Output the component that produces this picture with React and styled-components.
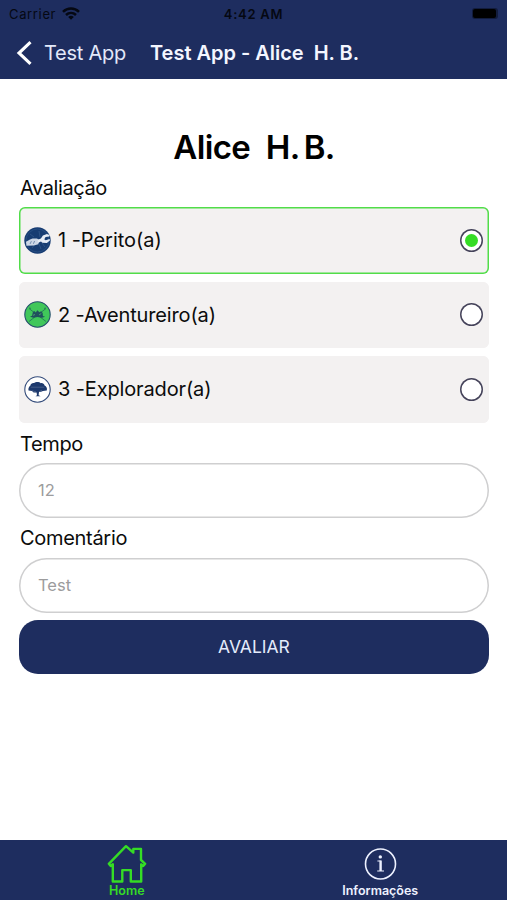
import React, { useState } from "react";
import styled, { createGlobalStyle } from "styled-components";

const NAVY = "#1e2d5f";
const GREEN = "#35dc25";

const GlobalStyle = createGlobalStyle`
  *, *::before, *::after { box-sizing: border-box; }
  body { margin: 0; background: #fff; }
  button, input { font: inherit; }
`;

const Screen = styled.div`
  width: 507px;
  height: 900px;
  display: flex;
  flex-direction: column;
  overflow: hidden;
  background: #fff;
  color: #0c0c0c;
  font-family: Inter, "Liberation Sans", sans-serif;
`;

const Header = styled.header`
  flex: none;
  height: 79px;
  background: ${NAVY};
`;

const StatusBar = styled.div`
  height: 27px;
  padding: 0 9px;
  display: grid;
  grid-template-columns: 1fr auto 1fr;
  align-items: center;
  color: #050812;
  font-size: 13px;
  line-height: 16px;
`;

const Carrier = styled.div`
  display: flex;
  align-items: center;
  gap: 6px;
  letter-spacing: 0.65px;
`;

const Clock = styled.div`
  font-weight: 600;
  letter-spacing: 0.75px;
`;

const Battery = styled.div`
  justify-self: end;
  width: 26px;
  height: 11px;
  padding: 1px;
  border-radius: 3px;
  background: #121c3d;
  &::before {
    content: "";
    display: block;
    height: 9px;
    width: 23px;
    border-radius: 2px;
    background: #000;
  }
`;

const NavBar = styled.nav`
  height: 52px;
  padding-left: 16px;
  display: flex;
  align-items: center;
  color: #f4f6ff;
  font-size: 20px;
  line-height: 26px;
  white-space: pre;
`;

const BackButton = styled.button`
  width: 134px;
  padding: 0;
  display: flex;
  align-items: center;
  gap: 11px;
  border: 0;
  background: none;
  color: #e3e9fa;
  letter-spacing: -0.25px;
`;

const NavTitle = styled.span`
  font-weight: 600;
  letter-spacing: -0.02px;
`;

const Content = styled.main`
  flex: 1;
  padding: 46px 18px 0 19px;
`;

const Name = styled.h1`
  margin: 0;
  height: 45px;
  text-align: center;
  white-space: pre;
  font-size: 33px;
  font-weight: 600;
  line-height: 44px;
  letter-spacing: -0.6px;
  color: #000;
`;

const Initial = styled.span`
  margin-left: -3px;
`;

const Label = styled.div`
  height: ${(p) => p.$height}px;
  padding: ${(p) => p.$top}px 0 0 1px;
  font-size: 20px;
  line-height: 26px;
  letter-spacing: ${(p) => p.$tracking || 0}px;
`;

const Options = styled.div`
  display: flex;
  flex-direction: column;
  gap: 8px;
`;

const Option = styled.button`
  height: 66.6px;
  padding: 0 6px 0 5px;
  display: flex;
  align-items: center;
  gap: 7px;
  border: 0;
  border-radius: 6px;
  box-shadow: inset 0 0 0 1.5px ${(p) => (p.$selected ? "#51dd49" : "#f3f1f1")};
  background: #f3f1f1;
  color: #0c0c0c;
  text-align: left;
  font-size: 20px;
  letter-spacing: ${(p) => p.$tracking}px;
`;

const OptionText = styled.span`
  flex: 1;
`;

const Radio = styled.span`
  width: 23px;
  height: 23px;
  display: grid;
  place-items: center;
  box-shadow: inset 0 0 0 1.5px #45435a;
  border-radius: 50%;
  background: #fff;
`;

const Dot = styled.span`
  width: 13px;
  height: 13px;
  border-radius: 50%;
  background: ${GREEN};
`;

const Field = styled.input`
  display: block;
  width: 100%;
  height: 55px;
  padding: 0 19px;
  border: 0;
  box-shadow: inset 0 0 0 1.5px #cfcfd0;
  border-radius: 28px;
  outline: 0;
  background: #fff;
  color: #9c9c9d;
  font-size: 16.5px;
`;

const Submit = styled.button`
  width: 100%;
  height: 54px;
  margin-top: 7px;
  border: 0;
  border-radius: 19px;
  background: ${NAVY};
  color: #e4ebfb;
  font-size: 17.5px;
`;

const TabBar = styled.nav`
  flex: none;
  height: 60px;
  display: grid;
  grid-template-columns: 1fr 1fr;
  background: ${NAVY};
`;

const Tab = styled.button`
  padding: 4px 0 0;
  display: flex;
  flex-direction: column;
  align-items: center;
  border: 0;
  background: none;
  color: ${(p) => (p.$active ? GREEN : "#edf1ff")};
  font-size: 12.5px;
  font-weight: 600;
  line-height: 14px;
`;

const TabIcon = styled.svg`
  flex: none;
  width: 40px;
  height: 40px;
  fill: none;
  stroke: currentColor;
`;

const Emblem = styled.svg`
  flex: none;
  width: 27px;
  height: 27px;
`;

const Glyph = styled.svg`
  flex: none;
  display: block;
`;

function WifiIcon() {
  return (
    <Glyph width="18" height="13" viewBox="0 0 18 13" fill="none" stroke="currentColor" strokeWidth="2.5">
      <path d="M1 4.8C5.5.4 12.5.4 17 4.8M4 8c2.9-2.8 7.1-2.8 10 0" />
      <path d="M6.2 9.9c1.7-1.4 3.9-1.4 5.6 0L9 12.8z" fill="currentColor" stroke="none" />
    </Glyph>
  );
}

function ExpertEmblem() {
  return (
    <Emblem viewBox="0 0 27 27">
      <circle cx="13.5" cy="13.5" r="13.2" fill="#173c72" />
      <circle cx="13.5" cy="13.5" r="11.5" fill="none" stroke="#2d5488" strokeWidth=".7" />
      <path d="M6 7l4 3M15 4l1 6M8 21l3-4M17 22l-2-5M21 20l-3-4" stroke="#34588a" strokeWidth=".8" />
      <path d="M2 14.8l4-2.2 2.5-1 4.5-.2 2.2 1.5-.9 4.4-4.4 1.1-7.5.3z" fill="#ccd6e6" />
      <path d="M6 17l1.4-2.8M9.4 16.8l1.2-2.8" stroke="#5c7aa3" strokeWidth=".8" />
      <path d="M13.8 12.8l3.1-1.3 2-3 4-1.6 2.7 1-.2 1.7-3.8.4-1.3 2.2 1.4 1.1 3.8-1.3.6 1.3-3.2 2.6-4.6-.1-1.3-1.2-3.2 1.4z" fill="#e6ecf5" />
    </Emblem>
  );
}

function AdventurerEmblem() {
  return (
    <Emblem viewBox="0 0 27 27">
      <circle cx="13.5" cy="13.5" r="12.7" fill="#40c75a" stroke="#27506e" strokeWidth="1.1" />
      <path d="M5 7.5l17 13M22 7.5L5 20.5M5 7l2 .4M22 7l-2 .4" stroke="#268057" strokeWidth="1" />
      <path d="M6 15.6l2.1-.8.7-3.5 1.5-1.3 1.4 1.5 1.7-2.2 2 2 1.7-1.1 1.6 1.7.2 3 2.2.8-3.1 1-4.5-.7-4.3.8z" fill="#20515d" />
      <path d="M9 14.3l2-.8M15 14l2.3-1.5" stroke="#57ae70" strokeWidth=".8" />
    </Emblem>
  );
}

function ExplorerEmblem() {
  return (
    <Emblem viewBox="0 0 27 27">
      <circle cx="13.5" cy="13.5" r="12.7" fill="#fff" stroke="#344c7b" strokeWidth="1.1" />
      <path d="M4.5 14.4c-.4-2 .4-3.9 1.8-4.7.3-2 2.2-3 3.9-2.6 1.5-1.3 5-1.4 6.4.1 1.9-.5 3.6.8 4 2.4 1.8.8 2.8 2.8 2.2 4.8l-3.9.5-1.8.9-2.1.2-.4 3.3 2 1h-5.1l1.5-1.1-.4-2.7-3-.1-1.5-1.4z" fill="#1d396d" />
      <path d="M6.7 11.2h13.6M8 14.7l4 1.2M18 14.2l-3 1.5" stroke="#5f769b" strokeWidth=".6" />
    </Emblem>
  );
}

function HomeIcon() {
  return (
    <TabIcon viewBox="0 0 40 40" strokeWidth="2.4" strokeLinejoin="round" strokeLinecap="round">
      <path d="M1.8 19.8L19 2.2 26.3 8.6V4.9H34V16l4.2 3.8-2 2.2-2-1.7V37.5H23.8V26.1h-8.5v11.4H5.8V20.3L3.7 22z" />
    </TabIcon>
  );
}

function InfoIcon() {
  return (
    <TabIcon viewBox="0 0 40 40" strokeWidth="1.6">
      <circle cx="20.5" cy="20" r="15" />
      <circle cx="20.3" cy="12.9" r="1.7" fill="currentColor" stroke="none" />
      <path d="M17.4 17h3.4M17.2 27h6.8" strokeWidth="1.2" />
      <path d="M20.6 16.5V27" strokeWidth="2.4" />
    </TabIcon>
  );
}

const LEVELS = [
  { text: "1 -Perito(a)", Icon: ExpertEmblem, tracking: -0.04 },
  { text: "2 -Aventureiro(a)", Icon: AdventurerEmblem, tracking: -0.14 },
  { text: "3 -Explorador(a)", Icon: ExplorerEmblem, tracking: -0.14 },
];

export default function App() {
  const [level, setLevel] = useState(0);
  return (
    <Screen>
      <GlobalStyle />
      <Header>
        <StatusBar>
          <Carrier>Carrier<WifiIcon /></Carrier>
          <Clock>4:42 AM</Clock>
          <Battery />
        </StatusBar>
        <NavBar>
          <BackButton>
            <Glyph width="17" height="26" viewBox="0 0 17 26" fill="none" stroke="#fff" strokeWidth="3.1">
              <path d="M14.5 2.2L3 13l11.5 10.8" />
            </Glyph>
            Test App
          </BackButton>
          <NavTitle>{"Test App - Alice  H. B."}</NavTitle>
        </NavBar>
      </Header>
      <Content>
        <Name>{"Alice  H. "}<Initial>B.</Initial></Name>
        <Label $height={37} $top={5} $tracking={-0.42}>Avaliação</Label>
        <Options>
          {LEVELS.map(({ text, Icon, tracking }, i) => (
            <Option key={text} $selected={i === level} $tracking={tracking} onClick={() => setLevel(i)}>
              <Icon />
              <OptionText>{text}</OptionText>
              <Radio>{i === level && <Dot />}</Radio>
            </Option>
          ))}
        </Options>
        <Label $height={40} $top={8} $tracking={-0.35}>Tempo</Label>
        <Field defaultValue="12" />
        <Label $height={40} $top={7} $tracking={-0.3}>Comentário</Label>
        <Field defaultValue="Test" />
        <Submit>AVALIAR</Submit>
      </Content>
      <TabBar>
        <Tab $active><HomeIcon />Home</Tab>
        <Tab><InfoIcon />Informações</Tab>
      </TabBar>
    </Screen>
  );
}
